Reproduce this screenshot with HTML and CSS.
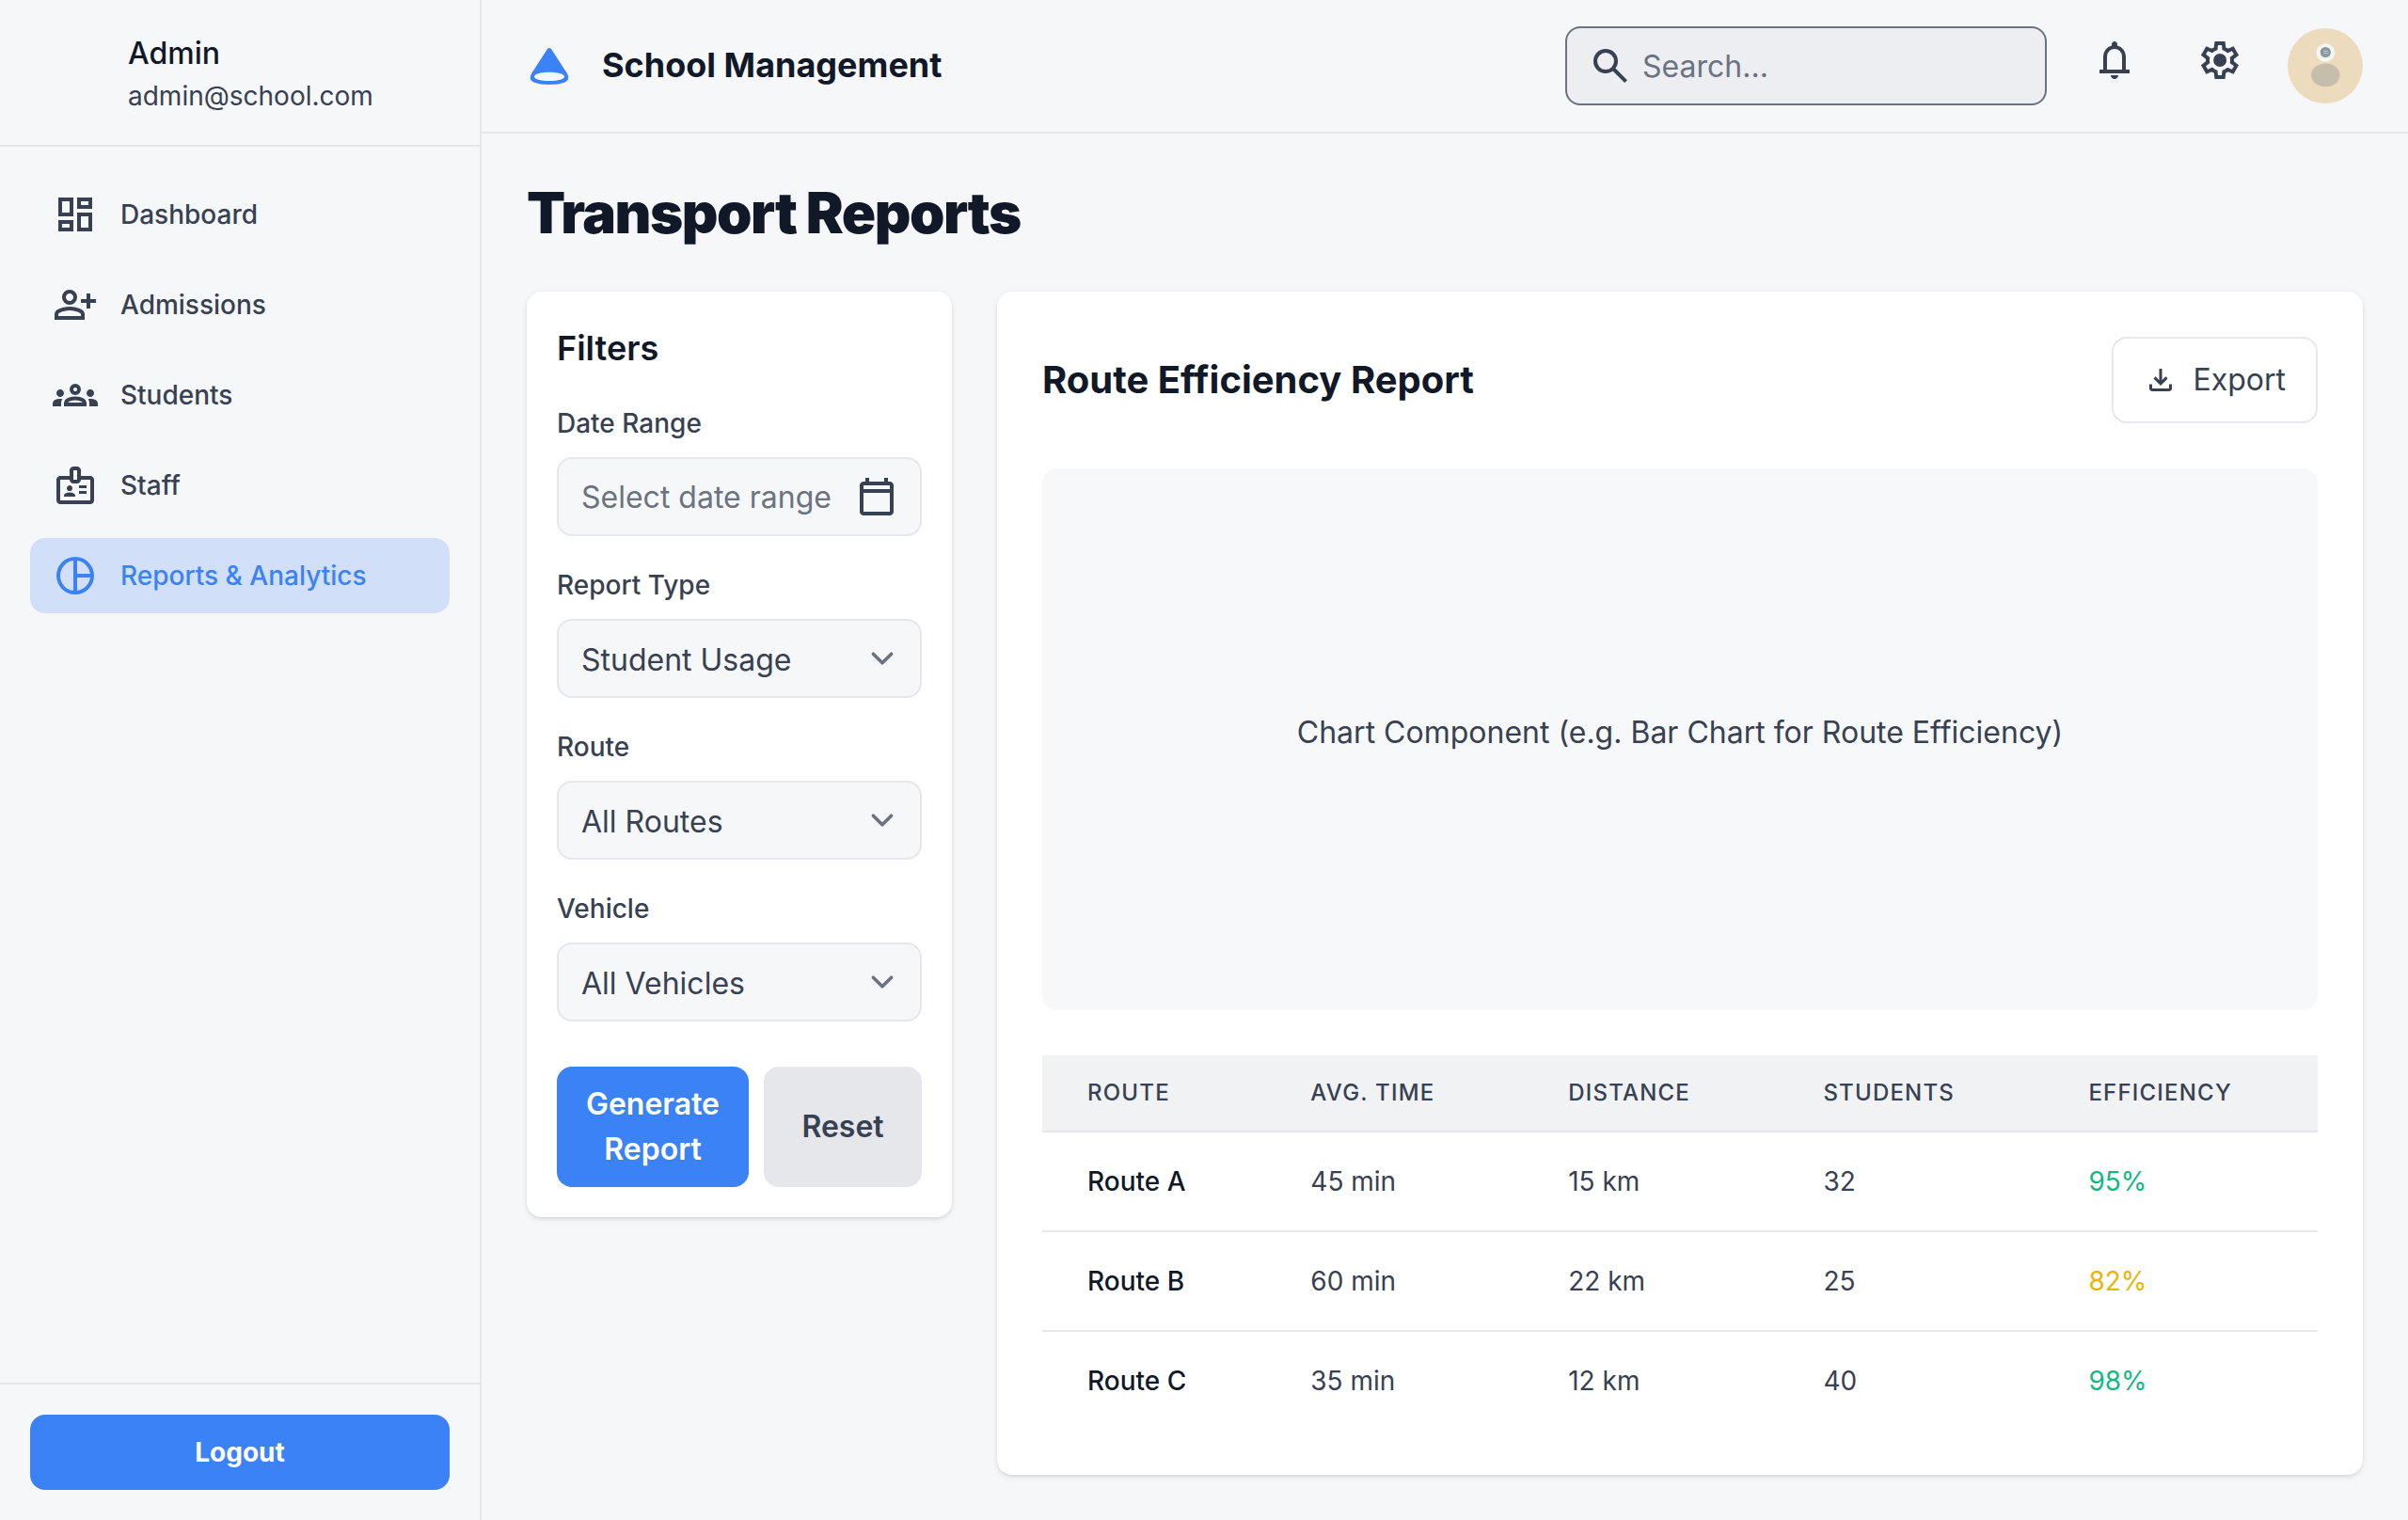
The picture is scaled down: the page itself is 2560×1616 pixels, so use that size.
FILE: index.html
```html
<!DOCTYPE html>
<html lang="en">
<head>
<meta charset="utf-8">
<meta name="viewport" content="width=device-width, initial-scale=1">
<title>Transport Reports - School Management</title>
<link rel="stylesheet" href="styles.css">
</head>
<body>
<div class="app">
  <aside class="sidebar">
    <div class="profile">
      <div class="profile-photo"></div>
      <div>
        <p class="profile-name">Admin</p>
        <p class="profile-email">admin@school.com</p>
      </div>
    </div>
    <nav class="nav">
      <a class="nav-link" href="#">
        <svg class="icon" viewBox="0 -960 960 960" aria-hidden="true"><path d="M520-600v-240h320v240H520ZM120-440v-400h320v400H120Zm400 320v-400h320v400H520Zm-400 0v-240h320v240H120Zm80-400h160v-240H200v240Zm400 320h160v-240H600v240Zm0-480h160v-80H600v80ZM200-200h160v-80H200v80Z"/></svg>
        Dashboard</a>
      <a class="nav-link" href="#">
        <svg class="icon" viewBox="0 -960 960 960" aria-hidden="true"><path d="M720-400v-120H600v-80h120v-120h80v120h120v80H800v120h-80Zm-360-80q-66 0-113-47t-47-113q0-66 47-113t113-47q66 0 113 47t47 113q0 66-47 113t-113 47ZM40-160v-112q0-34 17.5-62.5T104-378q62-31 126-46.5T360-440q66 0 130 15.5T616-378q29 15 46.5 43.5T680-272v112H40Zm80-80h480v-32q0-11-5.500-20T580-306q-54-27-109-40.500T360-360q-56 0-111 13.500T140-306q-9 5-14.500 14t-5.500 20v32Zm240-320q33 0 56.500-23.500T440-640q0-33-23.500-56.500T360-720q-33 0-56.500 23.500T280-640q0 33 23.500 56.500T360-560Z"/></svg>
        Admissions</a>
      <a class="nav-link" href="#">
        <svg class="icon" viewBox="0 -960 960 960" aria-hidden="true"><path d="M0-240v-63q0-43 44-70t116-27q13 0 25 .5t23 2.500q-14 21-21 44t-7 48v65H0Zm240 0v-65q0-32 17.500-58.500T307-410q32-20 76.500-30t96.500-10q53 0 97.500 10t76.500 30q32 20 49 46.500t17 58.500v65H240Zm540 0v-65q0-26-6.500-49T754-397q11-2 22.500-2.500t23.500-.5q72 0 116 26.500t44 70.500v63H780Zm-455-80h311q-10-20-55.500-35T480-370q-55 0-100.500 15T325-320ZM160-440q-33 0-56.500-23.500T80-520q0-34 23.500-57t56.500-23q34 0 57 23t23 57q0 33-23 56.500T160-440Zm640 0q-33 0-56.500-23.500T720-520q0-34 23.500-57t56.500-23q34 0 57 23t23 57q0 33-23 56.500T800-440Zm-320-40q-50 0-85-35t-35-85q0-51 35-85.500t85-34.500q51 0 85.500 34.500T600-600q0 50-34.500 85T480-480Zm0-80q17 0 28.500-11.500T520-600q0-17-11.500-28.500T480-640q-17 0-28.500 11.500T440-600q0 17 11.500 28.500T480-560Z"/></svg>
        Students</a>
      <a class="nav-link" href="#">
        <svg class="icon" viewBox="0 -960 960 960" aria-hidden="true"><path d="M160-80q-33 0-56.500-23.500T80-160v-440q0-33 23.500-56.500T160-680h200v-120q0-33 23.500-56.500T440-880h80q33 0 56.500 23.500T600-800v120h200q33 0 56.500 23.500T880-600v440q0 33-23.500 56.500T800-80H160Zm0-80h640v-440H600q0 33-23.500 56.500T520-520h-80q-33 0-56.500-23.500T360-600H160v440Zm80-80h240v-18q0-17-9.500-31.500T444-312q-20-9-40.500-13.500T360-330q-23 0-43.500 4.500T276-312q-17 8-26.500 22.500T240-258v18Zm320-60h160v-60H560v60Zm-200-60q25 0 42.500-17.500T420-420q0-25-17.500-42.500T360-480q-25 0-42.500 17.500T300-420q0 25 17.500 42.500T360-360Zm200-60h160v-60H560v60ZM440-600h80v-200h-80v200Z"/></svg>
        Staff</a>
      <a class="nav-link nav-link-active" href="#" aria-current="page">
        <svg class="icon" viewBox="0 -960 960 960" aria-hidden="true"><path d="M520-520h278q-15-110-91.500-187T520-798v278Zm-80 358v-636q-121 15-200.500 105.500T160-480q0 122 79.500 212.500T440-162Zm80 0q110-14 187-91t91-187H520v278ZM480-80q-83 0-156-31.500T197-197q-54-54-85.500-127T80-480q0-83 31.500-156T197-763q54-54 127-85.500T480-880q83 0 155.500 31.500t127 86q54.500 54.500 86 127T880-480q0 82-31.500 155t-86 127.500q-54.500 54.500-127 86T480-80Z"/></svg>
        Reports &amp; Analytics</a>
    </nav>
    <div class="sidebar-footer">
      <button class="btn btn-primary btn-logout" type="button">Logout</button>
    </div>
  </aside>

  <div class="page">
    <header class="topbar">
      <div class="brand">
        <svg class="brand-logo" viewBox="0 0 48 48" aria-hidden="true"><path fill-rule="evenodd" d="M22 6Q24 3.800 26 6L43.200 32.500Q46.500 38.500 40.500 41.500Q34 44 24 44T7.500 41.500Q1.500 38.500 4.800 32.500ZM24 30.800C14 30.800 8 33 8 35.500S14 40 24 40S40 38 40 35.500S34 30.800 24 30.800Z"/></svg>
        <span class="brand-name">School Management</span>
      </div>
      <div class="topbar-tools">
        <label class="search">
          <svg class="icon" viewBox="0 -960 960 960" aria-hidden="true"><path d="M784-120 532-372q-30 24-69 38t-83 14q-109 0-184.500-75.500T120-580q0-109 75.500-184.500T380-840q109 0 184.500 75.500T640-580q0 44-14 83t-38 69l252 252-56 56ZM380-400q75 0 127.500-52.500T560-580q0-75-52.500-127.500T380-760q-75 0-127.500 52.500T200-580q0 75 52.500 127.500T380-400Z"/></svg>
          <input class="search-input" type="search" placeholder="Search..." aria-label="Search">
        </label>
        <button class="icon-btn" type="button" aria-label="Notifications">
          <svg class="icon" viewBox="0 -960 960 960" aria-hidden="true"><path d="M160-200v-80h80v-280q0-83 50-147.500T420-792v-28q0-25 17.500-42.500T480-880q25 0 42.500 17.500T540-820v28q80 20 130 84.500T720-560v280h80v80H160ZM480-80q-33 0-56.500-23.500T400-160h160q0 33-23.500 56.500T480-80ZM320-280h320v-280q0-66-47-113t-113-47q-66 0-113 47t-47 113v280Z"/></svg>
        </button>
        <button class="icon-btn" type="button" aria-label="Settings">
          <svg class="icon" viewBox="0 -960 960 960" aria-hidden="true"><path d="m370-80-16-128q-13-5-24.500-12T307-235l-119 50L78-375l103-78q-1-7-1-13.500v-27q0-6.500 1-13.500L78-585l110-190 119 50q11-8 23-15t24-12l16-128h220l16 128q13 5 24.500 12t22.500 15l119-50 110 190-103 78q1 7 1 13.500v27q0 6.500-2 13.500l103 78-110 190-118-50q-11 8-23 15t-24 12L590-80H370Zm70-80h79l14-106q31-8 57.500-23.500T639-327l99 41 39-68-86-65q5-14 7-29.500t2-31.500q0-16-2-31.500t-7-29.500l86-65-39-68-99 42q-22-23-48.500-38.500T533-694l-13-106h-79l-14 106q-31 8-57.500 23.500T321-633l-99-41-39 68 86 64q-5 15-7 30t-2 32q0 16 2 31t7 30l-86 65 39 68 99-42q22 23 48.500 38.500T427-266l13 106Zm42-180q58 0 99-41t41-99q0-58-41-99t-99-41q-59 0-99.500 41T342-480q0 58 40.500 99t99.500 41Z"/></svg>
        </button>
        <svg class="avatar" viewBox="0 0 80 80" role="img" aria-label="User avatar">
          <circle cx="40" cy="40" r="40" fill="#ecdbbc"/>
          <ellipse cx="40.300" cy="49.700" rx="15.300" ry="12.300" fill="#c7bdab"/>
          <circle cx="40.300" cy="26" r="9.800" fill="#f2f7f6"/>
          <circle cx="40.300" cy="25.500" r="5.600" fill="#87979b"/>
          <path d="M38 24.300h5M38 26.700h5" stroke="#c3cdce" stroke-width="1"/>
        </svg>
      </div>
    </header>

    <main class="content">
      <h1 class="page-title">Transport Reports</h1>
      <div class="layout">
        <form class="card filters">
          <h2 class="filters-title">Filters</h2>
          <div class="field">
            <label class="field-label" for="date-range">Date Range</label>
            <div class="date-control">
              <input class="date-input" id="date-range" type="text" placeholder="Select date range">
              <svg class="icon" viewBox="0 -960 960 960" aria-hidden="true"><path d="M200-80q-33 0-56.500-23.500T120-160v-560q0-33 23.500-56.500T200-800h40v-80h80v80h320v-80h80v80h40q33 0 56.500 23.500T840-720v560q0 33-23.500 56.500T760-80H200Zm0-80h560v-400H200v400Zm0-480h560v-80H200v80Z"/></svg>
            </div>
          </div>
          <div class="field">
            <label class="field-label" for="report-type">Report Type</label>
            <div class="select-wrap">
              <select class="select" id="report-type"><option>Student Usage</option><option>Route Efficiency</option></select>
              <svg class="chevron" viewBox="0 0 20 20" aria-hidden="true"><path d="m6 8 4 4 4-4"/></svg>
            </div>
          </div>
          <div class="field">
            <label class="field-label" for="route">Route</label>
            <div class="select-wrap">
              <select class="select" id="route"><option>All Routes</option><option>Route A</option><option>Route B</option><option>Route C</option></select>
              <svg class="chevron" viewBox="0 0 20 20" aria-hidden="true"><path d="m6 8 4 4 4-4"/></svg>
            </div>
          </div>
          <div class="field">
            <label class="field-label" for="vehicle">Vehicle</label>
            <div class="select-wrap">
              <select class="select" id="vehicle"><option>All Vehicles</option></select>
              <svg class="chevron" viewBox="0 0 20 20" aria-hidden="true"><path d="m6 8 4 4 4-4"/></svg>
            </div>
          </div>
          <div class="filter-actions">
            <button class="btn btn-primary" type="button">Generate Report</button>
            <button class="btn btn-muted" type="reset">Reset</button>
          </div>
        </form>

        <section class="card report">
          <div class="report-head">
            <h2 class="report-title">Route Efficiency Report</h2>
            <button class="btn btn-export" type="button">
              <svg class="icon-small" viewBox="0 -960 960 960" aria-hidden="true"><path d="M480-320 280-520l56-58 104 104v-326h80v326l104-104 56 58-200 200ZM240-160q-33 0-56.500-23.500T160-240v-120h80v120h480v-120h80v120q0 33-23.500 56.500T720-160H240Z"/></svg>
              Export
            </button>
          </div>
          <div class="chart"><p>Chart Component (e.g. Bar Chart for Route Efficiency)</p></div>
          <table class="routes">
            <colgroup><col class="col-route"><col class="col-time"><col class="col-distance"><col class="col-students"><col></colgroup>
            <thead>
              <tr><th scope="col">Route</th><th scope="col">Avg. Time</th><th scope="col">Distance</th><th scope="col">Students</th><th scope="col">Efficiency</th></tr>
            </thead>
            <tbody>
              <tr><th scope="row">Route A</th><td>45 min</td><td>15 km</td><td>32</td><td class="good">95%</td></tr>
              <tr><th scope="row">Route B</th><td>60 min</td><td>22 km</td><td>25</td><td class="fair">82%</td></tr>
              <tr><th scope="row">Route C</th><td>35 min</td><td>12 km</td><td>40</td><td class="good">98%</td></tr>
            </tbody>
          </table>
        </section>
      </div>
    </main>
  </div>
</div>
</body>
</html>
```
FILE: styles.css
```css
:root {
  --bg: #f6f7f9;
  --surface: #ffffff;
  --line: #e5e7eb;
  --ink: #111827;
  --text: #374151;
  --muted: #6b7280;
  --primary: #3b82f6;
}

*, *::before, *::after { box-sizing: border-box; }

body {
  margin: 0;
  background: var(--bg);
  color: var(--text);
  font-family: Inter, "Liberation Sans", sans-serif;
  font-size: 32px;
  line-height: 48px;
  font-variation-settings: "opsz" 16;
}

h1, h2, p { margin: 0; }
button, input, select { font: inherit; font-variation-settings: inherit; color: inherit; }
button { cursor: pointer; }

.app { display: flex; min-height: 100vh; }

.icon { display: block; flex: none; width: 48px; height: 48px; fill: currentColor; }
.icon-small { display: block; flex: none; width: 36px; height: 36px; fill: currentColor; }

/* Sidebar */
.sidebar {
  display: flex;
  flex-direction: column;
  flex: none;
  width: 512px;
  border-right: 2px solid var(--line);
}
.profile {
  display: flex;
  align-items: center;
  gap: 24px;
  padding: 33px 32px 31px;
  border-bottom: 2px solid var(--line);
}
.profile-photo { width: 80px; height: 80px; border-radius: 50%; }
.profile-name { color: var(--ink); font-weight: 500; }
.profile-email { font-size: 28px; line-height: 42px; }

.nav { display: flex; flex-direction: column; flex: 1; gap: 16px; padding: 32px; }
.nav-link {
  display: flex;
  align-items: center;
  gap: 24px;
  padding: 16px 24px;
  border-radius: 16px;
  color: var(--text);
  font-size: 28px;
  font-weight: 500;
  text-decoration: none;
}
.nav-link-active { background: #d1dff8; color: var(--primary); }

.sidebar-footer { padding: 32px; border-top: 2px solid var(--line); }

/* Buttons */
.btn {
  padding: 16px 24px;
  border: 0;
  border-radius: 16px;
  font-weight: 600;
}
.btn-primary { background: var(--primary); color: #ffffff; }
.btn-muted { background: var(--line); }
.btn-logout { width: 100%; font-size: 28px; font-weight: 700; }
.btn-export {
  display: flex;
  align-items: center;
  gap: 17px;
  padding: 20px 32px;
  border: 2px solid var(--line);
  background: var(--surface);
  font-weight: 400;
}

/* Top bar */
.page { flex: 1; min-width: 0; }
.topbar {
  display: flex;
  align-items: center;
  justify-content: space-between;
  padding: 24px 48px;
  border-bottom: 2px solid var(--line);
}
.brand { display: flex; align-items: center; gap: 32px; }
.brand-logo { width: 48px; height: 48px; fill: var(--primary); }
.brand-name { padding-bottom: 2px; color: var(--ink); font-size: 36px; font-weight: 700; }
.topbar-tools { display: flex; align-items: center; gap: 32px; }

.search {
  display: flex;
  align-items: center;
  gap: 10px;
  width: 512px;
  padding: 16px 22px;
  border: 2px solid var(--muted);
  border-radius: 16px;
  background: #edeef2;
}
.search-input, .date-input {
  flex: 1;
  min-width: 0;
  height: 48px;
  padding: 2px 0 0;
  border: 0;
  outline: 0;
  background: none;
}
.search-input::placeholder, .date-input::placeholder { color: var(--muted); opacity: 1; }

.icon-btn { padding: 16px 16px 28px; border: 0; background: none; }
.avatar { display: block; width: 80px; height: 80px; }

/* Content */
.content { padding: 48px; }
.page-title {
  margin-bottom: 48px;
  color: var(--ink);
  font-size: 60px;
  font-weight: 900;
  line-height: 72px;
  letter-spacing: -0.025em;
  font-variation-settings: "opsz" 30;
}
.layout {
  display: grid;
  grid-template-columns: repeat(4, minmax(0, 1fr));
  gap: 48px;
  align-items: start;
}
.card {
  border-radius: 16px;
  background: var(--surface);
  box-shadow: 0 2px 6px rgba(0, 0, 0, 0.1), 0 2px 4px -2px rgba(0, 0, 0, 0.1);
}

/* Filters */
.filters { display: flex; flex-direction: column; gap: 32px; padding: 32px; }
.filters-title { color: var(--ink); font-size: 36px; font-weight: 600; line-height: 56px; }
.field { display: flex; flex-direction: column; gap: 16px; }
.field-label { font-size: 28px; font-weight: 500; line-height: 40px; }
.date-control {
  display: flex;
  align-items: center;
  padding: 16px 22px 16px 24px;
  border: 2px solid var(--line);
  border-radius: 16px;
  background: var(--bg);
}
.select-wrap { display: grid; align-items: center; }
.select {
  grid-area: 1 / 1;
  width: 100%;
  height: 84px;
  padding: 18px 80px 16px 24px;
  border: 2px solid var(--line);
  border-radius: 16px;
  background: var(--bg);
  appearance: none;
}
.chevron {
  grid-area: 1 / 1;
  justify-self: end;
  width: 48px;
  height: 48px;
  margin-right: 18px;
  fill: none;
  stroke: var(--muted);
  stroke-width: 1.5;
  stroke-linecap: round;
  stroke-linejoin: round;
  pointer-events: none;
}
.filter-actions {
  display: grid;
  grid-template-columns: minmax(0, 17fr) minmax(0, 14fr);
  gap: 16px;
  padding-top: 16px;
}

/* Report */
.report { grid-column: span 3; padding: 48px; }
.report-head { display: flex; align-items: center; justify-content: space-between; margin-bottom: 48px; }
.report-title { color: var(--ink); font-size: 40px; font-weight: 700; font-variation-settings: "opsz" 20; }
.chart {
  display: flex;
  align-items: center;
  justify-content: center;
  height: 576px;
  padding-bottom: 14px;
  margin-bottom: 48px;
  border-radius: 16px;
  background: #f7f8fa;
}

.routes { width: 100%; border-collapse: collapse; font-size: 28px; line-height: 40px; text-align: left; }
.routes th, .routes td { padding: 32px 48px; font-weight: 400; }
.routes thead { background: #f1f2f4; }
.routes thead th {
  padding: 24px 48px;
  font-size: 24px;
  font-weight: 500;
  line-height: 32px;
  letter-spacing: 0.05em;
  text-transform: uppercase;
}
.routes tr { border-bottom: 2px solid var(--line); }
.routes tbody tr:last-child { border-bottom: 0; }
.routes tbody th { color: var(--ink); font-weight: 500; }
.routes .good { color: #10b981; }
.routes .fair { color: #eab308; }
.col-route { width: 17.5%; }
.col-time { width: 20.2%; }
.col-distance { width: 20%; }
.col-students { width: 20.8%; }
```
